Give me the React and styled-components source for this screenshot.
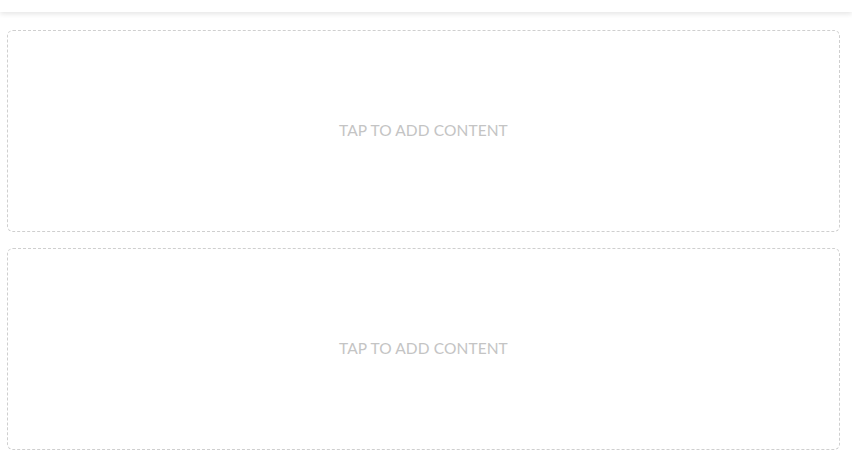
import React from 'react';
import styled, { createGlobalStyle } from 'styled-components';

const GlobalStyle = createGlobalStyle`
    body {
        margin: 0;
        background: #fff;
        font-family: Lato, "Open Sans", sans-serif;
    }
`;

const Page = styled.div`
    display: flex;
    flex-direction: column;
`;

const TopBar = styled.div`
    height: 12px;
    background: #fff;
    box-shadow: 0 2px 5px rgba(0, 0, 0, 0.1);
`;

const SlotList = styled.div`
    display: flex;
    flex-direction: column;
    gap: 16px;
    padding: 18px 12px 0 7px;
`;

const Slot = styled.div`
    height: 200px;
    border: 1px dashed #cfcfcf;
    border-radius: 6px;
    display: flex;
    align-items: center;
    justify-content: center;
    padding-bottom: 2px;
    box-sizing: border-box;
    height: 202px;
    cursor: pointer;
`;

const SlotLabel = styled.span`
    color: #c4c4c4;
    font-size: 15.5px;
    letter-spacing: 0.1px;
    text-transform: uppercase;
`;

const App = () => {
    const slots = [1, 2];

    return (
        <>
            <GlobalStyle />
            <Page>
                <TopBar />
                <SlotList>
                    {slots.map((id) => (
                        <Slot key={id}>
                            <SlotLabel>Tap to add content</SlotLabel>
                        </Slot>
                    ))}
                </SlotList>
            </Page>
        </>
    );
};

export default App;
